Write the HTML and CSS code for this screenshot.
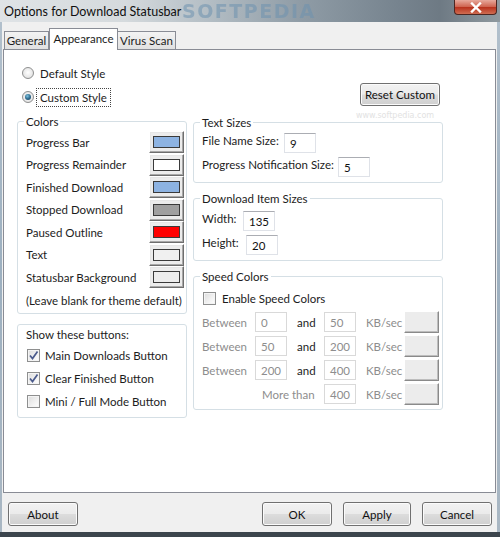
FILE: index.html
```html
<!DOCTYPE html>
<html>
<head>
<meta charset="utf-8">
<link rel="stylesheet" href="styles.css">
</head>
<body>
<div class="window">
  <div class="titlebar">
    <span class="title">Options for Download Statusbar</span>
    <span class="wm">SOFTPEDIA</span>
    <div class="close"><svg width="14" height="11" viewBox="0 0 14 11"><path d="M3 1.5 L11 9.5 M11 1.5 L3 9.5" stroke="#fff" stroke-width="2.4" stroke-linecap="square"/></svg></div>
  </div>
  <div class="client">
    <div class="tabs">
      <div class="tab t-general">General</div>
      <div class="tab active t-appear">Appearance</div>
      <div class="tab t-virus">Virus Scan</div>
    </div>
    <div class="panel">
      <span class="wm3">www.softpedia.com</span>
      <div class="content">
        <div class="top">
          <div class="radios">
            <div class="radio-row"><span class="radio"></span><span class="rlabel">Default Style</span></div>
            <div class="radio-row"><span class="radio checked"><span class="dot"></span></span><span class="rlabel focus">Custom Style</span></div>
          </div>
          <button class="vbtn reset">Reset Custom</button>
        </div>
        <div class="cols">
          <div class="col">
            <fieldset class="colors">
              <legend>Colors</legend>
              <div class="crows">
                <div class="crow"><span>Progress Bar</span><span class="cbtn"><span class="sw" style="background:#8db3e2"></span></span></div>
                <div class="crow"><span>Progress Remainder</span><span class="cbtn"><span class="sw" style="background:#ffffff"></span></span></div>
                <div class="crow"><span>Finished Download</span><span class="cbtn"><span class="sw" style="background:#8db3e2"></span></span></div>
                <div class="crow"><span>Stopped Download</span><span class="cbtn"><span class="sw" style="background:#a0a0a0"></span></span></div>
                <div class="crow"><span>Paused Outline</span><span class="cbtn"><span class="sw" style="background:#ff0000"></span></span></div>
                <div class="crow"><span>Text</span><span class="cbtn"><span class="sw" style="background:#f0f0f0"></span></span></div>
                <div class="crow"><span>Statusbar Background</span><span class="cbtn"><span class="sw" style="background:#ececec"></span></span></div>
              </div>
              <div class="note">(Leave blank for theme default)</div>
            </fieldset>
            <div class="showbox">
              <div class="showtitle">Show these buttons:</div>
              <div class="chk-row"><span class="chk"><svg width="11" height="11" viewBox="0 0 11 11"><path d="M2 5.5 L4.5 8.5 L9.5 1.5" fill="none" stroke="#4a5a8c" stroke-width="1.7"/></svg></span><span>Main Downloads Button</span></div>
              <div class="chk-row"><span class="chk"><svg width="11" height="11" viewBox="0 0 11 11"><path d="M2 5.5 L4.5 8.5 L9.5 1.5" fill="none" stroke="#4a5a8c" stroke-width="1.7"/></svg></span><span>Clear Finished Button</span></div>
              <div class="chk-row"><span class="chk"></span><span>Mini / Full Mode Button</span></div>
            </div>
          </div>
          <div class="col">
            <fieldset class="textsizes">
              <legend>Text Sizes</legend>
              <div class="frow"><span class="flabel w-fname">File Name Size:</span><span class="tbox">9</span></div>
              <div class="frow"><span class="flabel w-prog">Progress Notification Size:</span><span class="tbox">5</span></div>
            </fieldset>
            <fieldset class="itemsizes">
              <legend>Download Item Sizes</legend>
              <div class="frow"><span class="flabel w-width">Width:</span><span class="tbox">135</span></div>
              <div class="frow"><span class="flabel w-height">Height:</span><span class="tbox">20</span></div>
            </fieldset>
            <fieldset class="speed">
              <legend>Speed Colors</legend>
              <div class="chk-row speedchk"><span class="chk"></span><span>Enable Speed Colors</span></div>
              <div class="sgrid">
                <span class="dis">Between</span><span class="tbox dtb">0</span><span class="and">and</span><span class="tbox dtb">50</span><span class="dis kb">KB/sec</span><span class="sbtn"></span>
                <span class="dis">Between</span><span class="tbox dtb">50</span><span class="and">and</span><span class="tbox dtb">200</span><span class="dis kb">KB/sec</span><span class="sbtn"></span>
                <span class="dis">Between</span><span class="tbox dtb">200</span><span class="and">and</span><span class="tbox dtb">400</span><span class="dis kb">KB/sec</span><span class="sbtn"></span>
                <span></span><span class="dis more">More than</span><span class="tbox dtb">400</span><span class="dis kb">KB/sec</span><span class="sbtn"></span>
              </div>
            </fieldset>
          </div>
        </div>
      </div>
    </div>
    <div class="bottom">
      <button class="vbtn bbtn">About</button>
      <span class="spacer"></span>
      <button class="vbtn bbtn">OK</button>
      <button class="vbtn bbtn apply">Apply</button>
      <button class="vbtn bbtn">Cancel</button>
    </div>
  </div>
</div>
</body>
</html>
```
FILE: styles.css
```css
* { box-sizing: border-box; }
html, body { margin: 0; padding: 0; }
body {
  width: 500px; height: 537px; overflow: hidden;
  font-family: Lato, "Open Sans", sans-serif;
  font-size: 11.5px; line-height: 15px; color: #1c1c1c;
}
.window {
  width: 500px; height: 537px;
  display: flex; flex-direction: column;
  background: linear-gradient(to bottom, #b3c1cd 0%, #9db0c0 50%, #a9b7c3 97%);
  box-shadow: inset 0 -5px 0 #3c454d;
}
.titlebar {
  height: 22px; flex: none; position: relative;
  display: flex; align-items: center; padding-left: 4px;
  background: linear-gradient(to right, #dfe3e6 0%, #d5dadd 25%, #b3bdc4 42%, #8f9ca6 60%, #76838e 80%, #6e7a84 88%, #8f999f 100%);
}
.title { font-size: 12.5px; color: #101010; position: relative; z-index: 2; }
.wm {
  position: absolute; left: 182px; top: 1px;
  font: bold 19px/20px "DejaVu Sans", sans-serif; letter-spacing: 1.5px;
  color: rgba(110, 145, 175, 0.55); filter: blur(0.7px);
}
.close {
  position: absolute; right: 3px; top: 0; width: 43px; height: 15px;
  border: 1px solid #4d2621; border-top: 0; border-radius: 0 0 4px 4px;
  background: linear-gradient(#e7a99c 0%, #cf6450 48%, #b8321d 52%, #cf6d52 100%);
  display: flex; align-items: center; justify-content: center;
}
.client {
  flex: 1; margin: 0 3px 5px 2px;
  background: #f0f0f0;
  display: flex; flex-direction: column;
}
.tabs {
  height: 27px; flex: none; display: flex; align-items: flex-end;
  padding-left: 2px; position: relative; z-index: 2;
}
.tab {
  height: 18px; border: 1px solid #898c95; border-bottom: 0;
  background: linear-gradient(#f3f3f3, #e1e1e1);
  display: flex; align-items: center; justify-content: center;
  color: #1c1c1c;
}
.tab + .tab { border-left: 0; }
.tab.active {
  height: 22px; background: #fff; margin-bottom: -1px;
  border-left: 1px solid #898c95; align-items: flex-start; padding-top: 2px;
}
.t-general { width: 45px; }
.t-appear { width: 69px; }
.t-virus { width: 58px; }
.panel {
  height: 444px; flex: none; margin: 0 1px;
  border: 1px solid #898c95; background: #fff;
  position: relative; padding-left: 13px;
}
.wm3 {
  position: absolute; left: 352px; top: 61px;
  font: 8px/10px "DejaVu Sans", sans-serif; color: #e2e2e2;
}
.content { width: 426px; position: relative; }
.top {
  height: 64px; display: flex; justify-content: space-between; align-items: flex-start;
  padding: 11px 3px 0 5px;
}
.radio-row { height: 24px; display: flex; align-items: center; }
.radio {
  width: 12px; height: 12px; border-radius: 50%;
  border: 1px solid #8e8f8f;
  background: radial-gradient(circle at 50% 45%, #ffffff 0%, #e4e4e4 70%, #d2d2d2 100%);
  display: flex; align-items: center; justify-content: center;
}
.dot {
  width: 6px; height: 6px; border-radius: 50%;
  background: radial-gradient(circle at 40% 35%, #7fc3e0 0%, #2f6d90 50%, #163a52 100%);
}
.rlabel { margin-left: 2px; padding: 1px 3px; border: 1px dotted transparent; }
.rlabel.focus { border-color: #444; }
.vbtn {
  font-family: inherit; font-size: 11.5px; color: #111;
  border: 1px solid #707070; border-radius: 3px;
  background: linear-gradient(#f2f2f2 0%, #ebebeb 48%, #dcdcdc 52%, #cfcfcf 100%);
  box-shadow: inset 0 0 0 1px #fbfbfb;
  padding: 0; margin: 0;
}
.reset { width: 80px; height: 23px; margin-top: 22px; position: relative; z-index: 1; }
.cols {
  display: grid; grid-template-columns: 170px 250px; column-gap: 6px; align-items: start;
}
fieldset {
  margin: 0; border: 1px solid #d5dfe5; border-radius: 3px;
  padding: 0 2px 0 8px; min-width: 0;
}
legend { padding: 0 2px; margin-left: -2px; line-height: 15px; }
.crows { padding-top: 2px; }
.crow {
  height: 22.5px; display: flex; align-items: center; justify-content: space-between;
}
.cbtn {
  width: 35px; height: 22px;
  border: 1px solid; border-color: #ffffff #6e6e6e #6e6e6e #ffffff;
  box-shadow: inset -1px -1px 0 #a8a8a8, inset 1px 1px 0 #e6e6e6;
  background: #ececec;
  display: flex; align-items: center; justify-content: center;
}
.sw { width: 27px; height: 12px; border: 1px solid #3a3a3a; }
.note { margin-top: 4px; padding-bottom: 5px; white-space: nowrap; }
.showbox {
  margin-top: 10px; border: 1px solid #d5dfe5; border-radius: 3px;
  padding: 2px 2px 4px 8px;
}
.showtitle { margin-bottom: 2px; }
.chk-row { height: 23px; display: flex; align-items: center; }
.chk {
  width: 13px; height: 13px; margin-left: 1px; margin-right: 5px;
  border: 1px solid #8e8f8f;
  background: linear-gradient(135deg, #dcdcdc 0%, #f2f2f2 60%, #ffffff 100%);
  box-shadow: inset 0 0 0 1px #f4f4f4;
  display: flex; align-items: center; justify-content: center;
}
.textsizes { margin-top: 1px; padding-top: 1px; padding-bottom: 3px; }
.itemsizes { margin-top: 8px; padding-top: 3px; padding-bottom: 3px; }
.speed { margin-top: 8px; padding-top: 3px; padding-bottom: 3px; }
.frow { height: 24px; display: flex; align-items: flex-start; }
.flabel { padding-top: 1.5px; flex: none; white-space: nowrap; }
.w-fname { width: 82px; }
.w-prog { width: 136px; }
.w-width { width: 41px; }
.w-height { width: 44px; }
.tbox {
  margin-top: 2px; width: 32px; height: 20px;
  border: 1px solid #dfe2e8; border-top-color: #abadb3;
  padding: 3px 0 0 5px; line-height: 14px; background: #fff; color: #111;
}
.speedchk { height: 22px; margin-bottom: 1px; }
.speedchk .chk { margin-right: 6px; }
.sgrid {
  display: grid; grid-template-columns: 53px 32px 37px 32px 48px 35px;
  grid-auto-rows: 24px; align-items: center;
}
.dis { color: #8d8d8d; }
.and { padding-left: 10px; color: #1c1c1c; }
.kb { padding-left: 10px; }
.more { grid-column: 2 / span 2; padding-left: 7px; }
.dtb { margin-top: 0; color: #8d8d8d; border-color: #d9d9d9; height: 20px; }
.sbtn {
  width: 35px; height: 22px;
  border: 1px solid; border-color: #ffffff #8a8a8a #8a8a8a #ffffff;
  box-shadow: inset -1px -1px 0 #bdbdbd;
  background: #ececec;
}
.bottom {
  display: flex; align-items: flex-start; padding: 9px 5px 0 6px; gap: 11px;
}
.spacer { flex: 1; }
.bbtn { width: 70px; height: 24px; }
.apply { width: 68px; }
```
